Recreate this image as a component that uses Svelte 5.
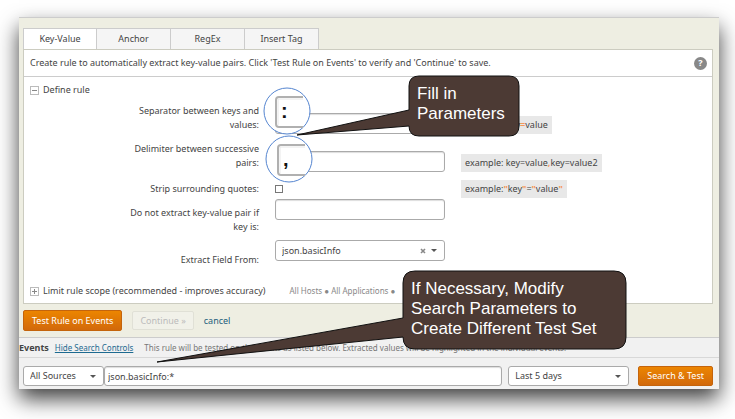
<script>
    const tabs = ["Key-Value", "Anchor", "RegEx", "Insert Tag"];

    let activeTab = "Key-Value";
    let source = "All Sources";
    let range = "Last 5 days";
    let field = "json.basicInfo";
    let query = "json.basicInfo:*";
    let stripQuotes = false;
    let ignoreKey = "";
    let separator = "";
    let delimiter = "";
</script>

<div class="page">
    <div class="window">
        <section class="editor">
            <div class="tabs" role="tablist">
                {#each tabs as tab}
                    <button
                        class="tab"
                        class:active={tab === activeTab}
                        role="tab"
                        aria-selected={tab === activeTab}
                        on:click={() => (activeTab = tab)}>{tab}</button
                    >
                {/each}
            </div>

            <div class="panel">
                <div class="intro">
                    <span>Create rule to automatically extract key-value pairs. Click 'Test Rule on Events' to verify and 'Continue' to save.</span>
                    <button class="help" aria-label="Help">?</button>
                </div>

                <div class="section-head">
                    <button class="toggle" aria-label="Collapse"><span class="minus"></span></button>
                    <span>Define rule</span>
                </div>

                <div class="fields">
                    <div class="row">
                        <label for="separator">Separator between keys and values:</label>
                        <div class="control">
                            <input id="separator" class="box" type="text" bind:value={separator} />
                            <div class="lens first">
                                <svg viewBox="0 0 48 48" width="48" height="48">
                                    <circle cx="24" cy="24" r="23" fill="#fff" stroke="#5585d0" />
                                    <path d="M40 10H16Q13 10 13 13V37Q13 40 16 40H40" fill="none" stroke="#b0b0b0" stroke-width="2" />
                                    <path d="M40 12H15V38" fill="none" stroke="#e8e8e8" />
                                </svg>
                                <span>:</span>
                            </div>
                        </div>
                        <div class="example">example: key<em>=</em>value</div>
                    </div>
                    <div class="row">
                        <label for="delimiter">Delimiter between successive pairs:</label>
                        <div class="control">
                            <input id="delimiter" class="box" type="text" bind:value={delimiter} />
                            <div class="lens second">
                                <svg viewBox="0 0 48 48" width="48" height="48">
                                    <circle cx="24" cy="24" r="23" fill="#fff" stroke="#5585d0" />
                                    <path d="M40 10H16Q13 10 13 13V37Q13 40 16 40H40" fill="none" stroke="#b0b0b0" stroke-width="2" />
                                    <path d="M40 12H15V38" fill="none" stroke="#e8e8e8" />
                                </svg>
                                <span>,</span>
                            </div>
                        </div>
                        <div class="example">example: key=value<em>,</em>key=value2</div>
                    </div>
                    <div class="row middle">
                        <label for="strip">Strip surrounding quotes:</label>
                        <div class="control">
                            <input id="strip" class="check" type="checkbox" bind:checked={stripQuotes} />
                        </div>
                        <div class="example">example:<em>"</em>key<em>"</em>=<em>"</em>value<em>"</em></div>
                    </div>
                    <div class="row top tall">
                        <label for="ignore">Do not extract key-value pair if key is:</label>
                        <div class="control">
                            <input id="ignore" class="box" type="text" bind:value={ignoreKey} />
                        </div>
                    </div>
                    <div class="row top">
                        <label for="field">Extract Field From:</label>
                        <div class="control select">
                            <select id="field" class="box" bind:value={field}>
                                <option>json.basicInfo</option>
                            </select>
                            <button class="clear" aria-label="Clear">
                                <svg viewBox="0 0 6 6" width="6" height="6">
                                    <path d="M1 1L5 5M5 1L1 5" stroke="#888" stroke-width="1.6" />
                                </svg>
                            </button>
                        </div>
                    </div>
                </div>

                <div class="section-head scope">
                    <button class="toggle" aria-label="Expand"><span class="minus"></span><span class="plus"></span></button>
                    <span>Limit rule scope (recommended - improves accuracy)</span>
                    <span class="hint">All Hosts ● All Applications ●</span>
                </div>
            </div>

            <div class="actions">
                <button class="primary">Test Rule on Events</button>
                <button class="continue" disabled>Continue »</button>
                <a class="cancel" href="#cancel">cancel</a>
            </div>
        </section>

        <div class="events">
            <strong>Events</strong>
            <a href="#controls">Hide Search Controls</a>
            <span>This rule will be tested on the events as listed below. Extracted values will be highlighted in the individual events.</span>
        </div>

        <div class="search">
            <div class="select source">
                <select class="box" aria-label="Source" bind:value={source}>
                    <option>All Sources</option>
                </select>
            </div>
            <input class="box query" type="text" aria-label="Search" bind:value={query} />
            <div class="select range">
                <select class="box" aria-label="Time range" bind:value={range}>
                    <option>Last 5 days</option>
                </select>
            </div>
            <button class="primary">Search &amp; Test</button>
        </div>

        <div class="callout fill">
            <svg viewBox="0 0 242 63" width="242" height="63">
                <path d="M141 1H231Q241 1 241 11V51Q241 61 231 61H141Q131 61 131 51L19 60L131 35V11Q131 1 141 1Z" />
            </svg>
            <p>Fill in Parameters</p>
        </div>
        <div class="callout modify">
            <svg viewBox="0 0 472 94" width="472" height="94">
                <path d="M259 1H458Q470 1 470 13V67Q470 79 458 79H259Q247 79 247 67L1 92L247 48V13Q247 1 259 1Z" />
            </svg>
            <p>If Necessary, Modify Search Parameters to Create Different Test Set</p>
        </div>
    </div>
</div>

<style>
    :global(body) {
        background: #fff;
    }

    .page {
        padding: 17px 16px 30px 19px;
        overflow: hidden;
        font-family: "Noto Sans", "Open Sans", sans-serif;
        font-size: 9px;
        line-height: 14px;
        color: #444;
    }

    .window {
        position: relative;
        background: #f1f1f1;
        box-shadow: 0 10px 20px rgba(0, 0, 0, 0.75);
    }

    button,
    input,
    select {
        box-sizing: border-box;
        margin: 0;
        font: inherit;
        color: inherit;
    }

    button {
        padding: 0;
        cursor: pointer;
    }

    .editor {
        padding: 10px 6px 6px 4px;
        background: #eeeee2;
        border-top: 1px solid #ccc;
        border-bottom: 1px solid #ccc;
    }

    .tabs {
        display: flex;
    }

    .tab {
        width: 74px;
        height: 21px;
        background: #f5f5f5;
        border: 1px solid #ccc;
        border-width: 1px 1px 0 0;
    }

    .tab.active {
        background: #fff;
        border-left-width: 1px;
    }

    .panel {
        padding-bottom: 5px;
        background: #fff;
        border: 1px solid #ccccc0;
    }

    .intro {
        display: flex;
        align-items: center;
        justify-content: space-between;
        height: 26px;
        padding: 0 5px 0 6px;
        border-bottom: 1px solid #ccc;
    }

    .help {
        width: 13px;
        height: 13px;
        line-height: 12px;
        font-weight: bold;
        color: #fff;
        background: #888;
        border: 0;
        border-radius: 50%;
    }

    .section-head {
        display: flex;
        align-items: center;
        gap: 4px;
        padding: 6px 6px 0;
    }

    .section-head.scope {
        padding-top: 11px;
    }

    .toggle {
        display: grid;
        place-items: center;
        width: 9px;
        height: 9px;
        background: #fff;
        border: 1px solid #bbb;
    }

    .toggle span {
        grid-area: 1 / 1;
        background: #888;
    }

    .minus {
        width: 5px;
        height: 1px;
    }

    .plus {
        width: 1px;
        height: 5px;
    }

    .hint {
        margin-left: 20px;
        font-size: 8px;
        color: #888;
    }

    .fields {
        display: flex;
        flex-direction: column;
        padding-top: 7px;
    }

    .row {
        display: grid;
        grid-template-columns: 136px 170px auto;
        justify-content: start;
        align-items: end;
        column-gap: 16px;
        padding: 0 0 8px 99px;
    }

    .row.middle {
        align-items: center;
        padding-bottom: 1px;
    }

    .row.top {
        padding-bottom: 6px;
    }

    .row.top .control {
        align-self: start;
        margin-bottom: 6px;
    }

    .row.tall .control {
        margin-bottom: 14px;
    }

    label {
        padding-bottom: 2px;
        text-align: right;
    }

    .middle label,
    .top label {
        padding-bottom: 0;
    }

    .control {
        position: relative;
        display: flex;
    }

    .box {
        width: 100%;
        height: 21px;
        padding: 0 6px;
        background: #fff;
        border: 1px solid #aaa;
        border-radius: 3px;
        box-shadow: inset 0 1px 1px #ddd;
        outline: none;
    }

    select.box {
        appearance: none;
        box-shadow: none;
    }

    .select {
        position: relative;
    }

    .select::after {
        content: "";
        position: absolute;
        top: 9px;
        right: 8px;
        border: 3px solid transparent;
        border-top-color: #555;
        border-bottom: 0;
        pointer-events: none;
    }

    .clear {
        position: absolute;
        top: 8px;
        right: 19px;
        display: flex;
        background: none;
        border: 0;
    }

    .check {
        appearance: none;
        width: 8px;
        height: 8px;
        background: #fff;
        border: 1px solid #777;
    }

    .example {
        justify-self: start;
        padding: 2px 4px;
        background: #e8e8e8;
    }

    .example em {
        font-style: normal;
        font-weight: bold;
        color: #f5985a;
    }

    .lens {
        position: absolute;
        display: flex;
    }

    .lens.first {
        left: -12px;
        top: -26px;
    }

    .lens.second {
        left: -10px;
        top: -16px;
    }

    .lens span {
        position: absolute;
        left: 18px;
        top: 13px;
        font-family: "Liberation Sans", Arial, sans-serif;
        font-size: 20px;
        line-height: 22px;
        font-weight: bold;
        color: #111;
    }

    .actions {
        display: flex;
        align-items: center;
        gap: 10px;
        padding-top: 6px;
    }

    .primary {
        height: 21px;
        padding: 0 8px;
        color: #fff;
        background: linear-gradient(#ec8500, #d2690b);
        border: 1px solid #c4640c;
        border-radius: 2px;
    }

    .continue {
        height: 19px;
        padding: 0 7px;
        color: #bbb;
        background: #f1f1e9;
        border: 1px solid #e0e0d6;
        border-radius: 2px;
    }

    .cancel {
        color: #22607c;
        text-decoration: none;
    }

    .events {
        display: flex;
        align-items: center;
        gap: 6px;
        height: 19px;
        border-bottom: 1px solid #d8d8d8;
        white-space: nowrap;
    }

    .events a {
        font-size: 8px;
        color: #1d6a90;
    }

    .events span {
        margin-left: 5px;
        font-size: 8px;
        color: #777;
    }

    .search {
        display: flex;
        align-items: center;
        padding: 8px 6px 3px 4px;
    }

    .source {
        width: 81px;
    }

    .query {
        flex: 1;
        width: auto;
        padding: 0 3px;
    }

    .range {
        width: 121px;
        margin: 0 9px 0 6px;
    }

    .search .box,
    .search .primary {
        height: 20px;
    }

    .callout {
        position: absolute;
        pointer-events: none;
        font-family: "Liberation Sans", Arial, sans-serif;
        font-size: 17px;
        line-height: 20px;
        color: #fff;
    }

    .callout svg {
        display: block;
        fill: #4c3a34;
        stroke: #111;
    }

    .callout p {
        position: absolute;
        margin: 0;
    }

    .fill {
        left: 259px;
        top: 58px;
    }

    .fill p {
        left: 139px;
        top: 9px;
        width: 90px;
    }

    .modify {
        left: 137px;
        top: 253px;
    }

    .modify p {
        left: 255px;
        top: 9px;
        width: 200px;
    }
</style>
